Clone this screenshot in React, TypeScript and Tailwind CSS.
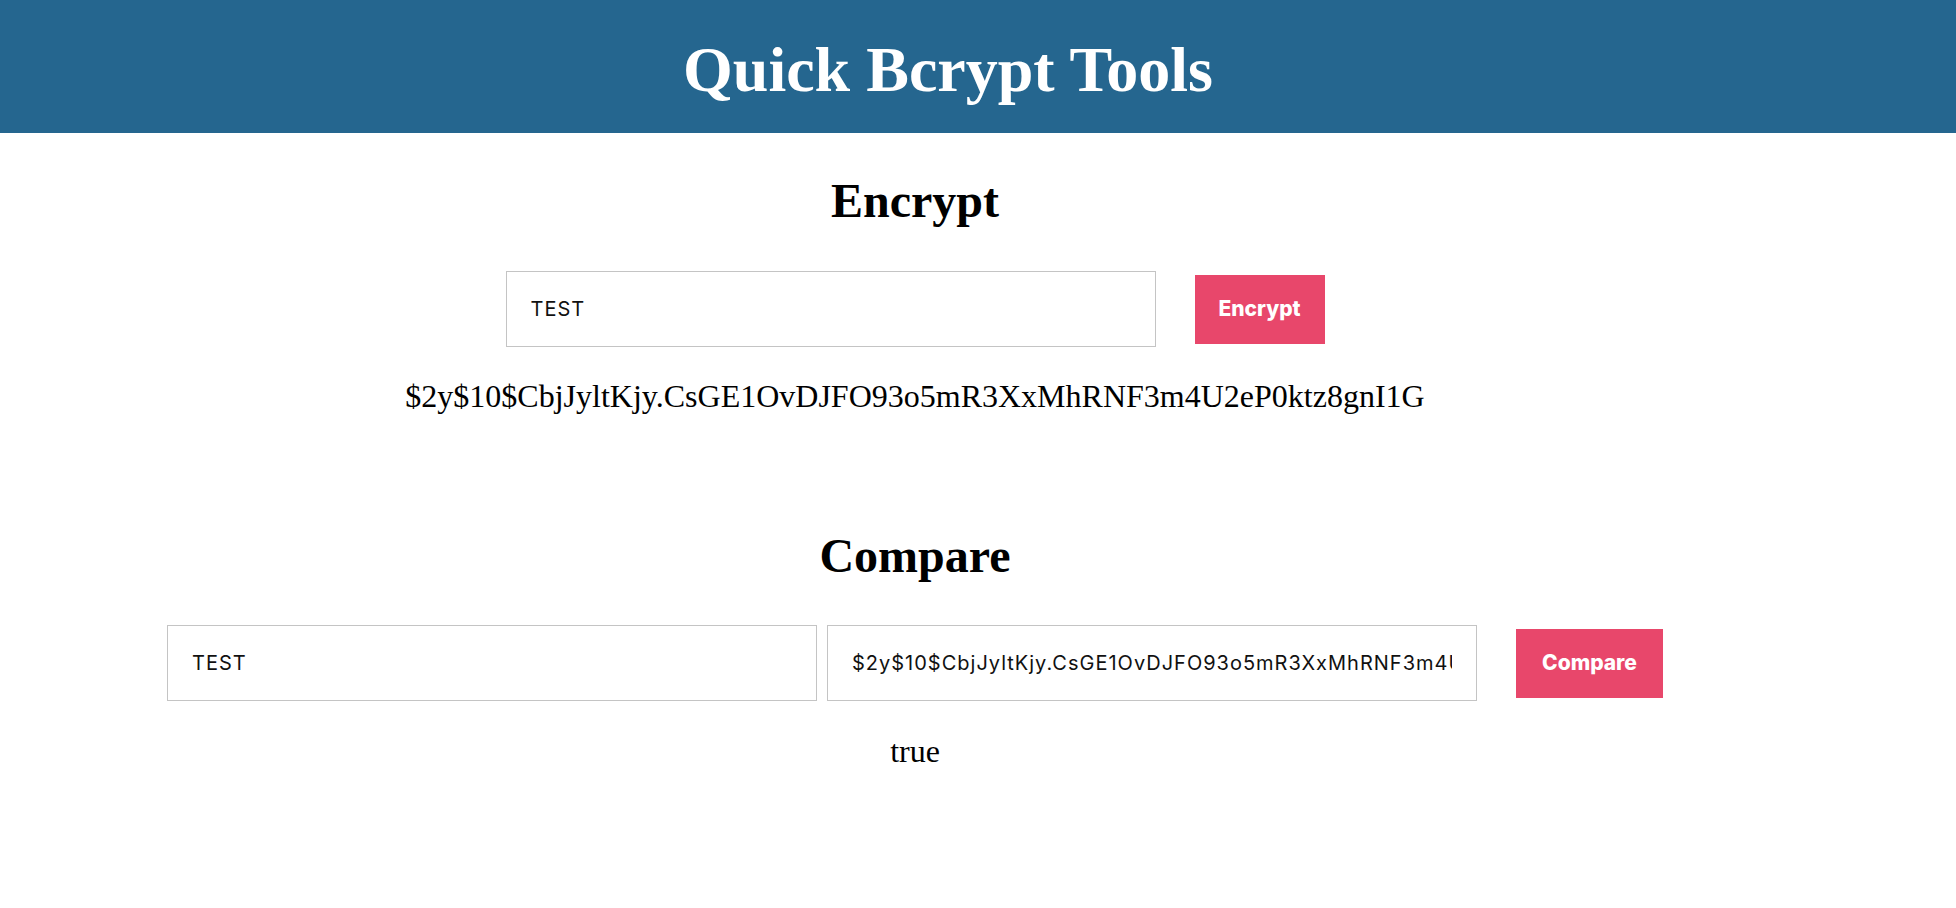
import React from "react";

const serif = { fontFamily: '"Liberation Serif", "Times New Roman", serif' };

const Field: React.FC<{ value: string }> = ({ value }) => (
	<input
		readOnly
		value={value}
		className="w-[650px] h-[76px] border border-[#c4c4c4] bg-white px-[24px] text-[20px] tracking-[0.05em] text-[#111] outline-none font-['Inter',sans-serif]"
	/>
);

const Btn: React.FC<{ label: string; w: string }> = ({ label, w }) => (
	<button
		className={`${w} h-[69px] bg-[#e8476b] text-white text-[21px] font-extrabold font-['Inter',sans-serif]`}
	>
		{label}
	</button>
);

const App: React.FC = () => {
	const hash = "$2y$10$CbjJyltKjy.CsGE1OvDJFO93o5mR3XxMhRNF3m4U2eP0ktz8gnI1G";
	return (
		<div className="w-full min-h-screen bg-white text-black" style={serif}>
			<div className="h-[133px] bg-[#25668f] pt-[38px] pr-[60px] text-center">
				<h1 className="text-[64px] leading-[64px] font-bold text-white">Quick Bcrypt Tools</h1>
			</div>
			<div className="pr-[126px] flex flex-col items-center">
				<h2 className="mt-[44px] text-[48px] leading-[48px] font-bold">Encrypt</h2>
				<div className="mt-[46px] flex items-center gap-[39px]">
					<Field value="TEST" />
					<Btn label="Encrypt" w="w-[130px]" />
				</div>
				<p className="mt-[33px] text-[32px] leading-[32px]">{hash}</p>
				<h2 className="mt-[120px] text-[48px] leading-[48px] font-bold">Compare</h2>
				<div className="mt-[45px] flex items-center">
					<Field value="TEST" />
					<div className="ml-[10px]">
						<Field value={hash} />
					</div>
					<div className="ml-[39px]">
						<Btn label="Compare" w="w-[147px]" />
					</div>
				</div>
				<p className="mt-[34px] text-[32px] leading-[32px]">true</p>
			</div>
		</div>
	);
};

export default App;
